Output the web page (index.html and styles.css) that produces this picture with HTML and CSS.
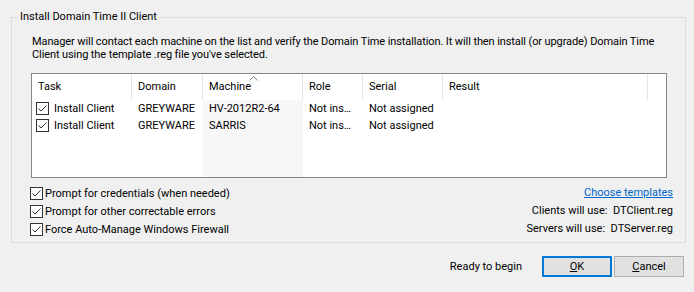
FILE: index.html
```html
<!DOCTYPE html>
<html>
<head>
    <title>Install Domain Time II Client</title>
    <link rel="stylesheet" href="styles.css">
</head>
<body>
    <div class="dialog">
        <fieldset class="group">
            <legend>Install Domain Time II Client</legend>

            <p class="intro">Manager will contact each machine on the list and verify the Domain Time installation. It will then install (or upgrade) Domain Time Client using the template .reg file you've selected.</p>

            <div class="list">
                <div class="col col-task">
                    <div class="th">Task</div>
                    <div class="td"><span class="check"><svg width="13" height="13" viewBox="0 0 13 13"><rect x="0.5" y="0.5" width="12" height="12" fill="#fff" stroke="#333"/><path d="M2.5 6.5 L5 9 L10.5 3.5" fill="none" stroke="#333" stroke-width="1"/></svg></span>Install Client</div>
                    <div class="td"><span class="check"><svg width="13" height="13" viewBox="0 0 13 13"><rect x="0.5" y="0.5" width="12" height="12" fill="#fff" stroke="#333"/><path d="M2.5 6.5 L5 9 L10.5 3.5" fill="none" stroke="#333" stroke-width="1"/></svg></span>Install Client</div>
                </div>
                <div class="col col-domain">
                    <div class="th">Domain</div>
                    <div class="td">GREYWARE</div>
                    <div class="td">GREYWARE</div>
                </div>
                <div class="col col-machine sorted">
                    <div class="th">Machine
                        <svg class="sort-arrow" width="9" height="5" viewBox="0 0 9 5"><path d="M0.5 4.5 L4.5 0.5 L8.5 4.5" fill="none" stroke="#888" stroke-width="1"/></svg>
                    </div>
                    <div class="td">HV-2012R2-64</div>
                    <div class="td">SARRIS</div>
                </div>
                <div class="col col-role">
                    <div class="th">Role</div>
                    <div class="td">Not ins…</div>
                    <div class="td">Not ins…</div>
                </div>
                <div class="col col-serial">
                    <div class="th">Serial</div>
                    <div class="td">Not assigned</div>
                    <div class="td">Not assigned</div>
                </div>
                <div class="col col-result">
                    <div class="th">Result</div>
                </div>
                <div class="col col-rest">
                    <div class="th"></div>
                </div>
            </div>

            <div class="options">
                <div class="checks">
                    <label class="opt"><span class="check"><svg width="13" height="13" viewBox="0 0 13 13"><rect x="0.5" y="0.5" width="12" height="12" fill="#fff" stroke="#333"/><path d="M2.5 6.5 L5 9 L10.5 3.5" fill="none" stroke="#333" stroke-width="1"/></svg></span>Prompt for credentials (when needed)</label>
                    <label class="opt"><span class="check"><svg width="13" height="13" viewBox="0 0 13 13"><rect x="0.5" y="0.5" width="12" height="12" fill="#fff" stroke="#333"/><path d="M2.5 6.5 L5 9 L10.5 3.5" fill="none" stroke="#333" stroke-width="1"/></svg></span>Prompt for other correctable errors</label>
                    <label class="opt"><span class="check"><svg width="13" height="13" viewBox="0 0 13 13"><rect x="0.5" y="0.5" width="12" height="12" fill="#fff" stroke="#333"/><path d="M2.5 6.5 L5 9 L10.5 3.5" fill="none" stroke="#333" stroke-width="1"/></svg></span>Force Auto-Manage Windows Firewall</label>
                </div>
                <div class="templates">
                    <a href="#" class="link">Choose templates</a>
                    <div class="line">Clients will use:&nbsp; DTClient.reg</div>
                    <div class="line">Servers will use:&nbsp; DTServer.reg</div>
                </div>
            </div>
        </fieldset>

        <div class="footer">
            <span class="status">Ready to begin</span>
            <button class="btn btn-default"><u>O</u>K</button>
            <button class="btn"><u>C</u>ancel</button>
        </div>
    </div>
</body>
</html>
```

FILE: styles.css
```css
body {
    margin: 0;
    background: #f0f0f0;
    font-family: Roboto, "Liberation Sans", Arial, sans-serif;
    font-size: 11px;
    color: #000;
}
.dialog {
    width: 694px;
    height: 292px;
    overflow: hidden;
}
.group {
    margin: 9px 8px 0 11px;
    padding: 0 18px 4px 19px;
    border: 1px solid #dcdcdc;
    min-width: 0;
}
.group legend {
    padding: 0 2px;
    margin-left: -13px;
    line-height: 16px;
}
.intro {
    margin: 10px -10px 0 1px;
    line-height: 13px;
    letter-spacing: -0.1px;
}
.list {
    display: flex;
    height: 103px;
    margin-top: 12px;
    background: #fff;
    border: 1px solid #828790;
}
.col {
    display: flex;
    flex-direction: column;
    overflow: hidden;
}
.th {
    position: relative;
    height: 26px;
    line-height: 26px;
    padding-left: 6px;
    border-right: 1px solid #e5e5e5;
    background: #fff;
    white-space: nowrap;
}
.td {
    height: 17px;
    line-height: 17px;
    padding-left: 6px;
    white-space: nowrap;
    display: flex;
    align-items: center;
}
.col-task { width: 100px; flex: none; }
.col-task .td { padding-left: 4px; }
.col-domain { width: 71px; flex: none; }
.col-machine { width: 100px; flex: none; }
.col-role { width: 60px; flex: none; }
.col-serial { width: 80px; flex: none; }
.col-result { width: 205px; flex: none; }
.col-rest { flex: 1; }
.col-rest .th { border-right: none; }
.sorted { background: #f7f7f7; }
.sort-arrow {
    position: absolute;
    left: 46px;
    top: 2px;
}
.check {
    display: inline-flex;
    flex: none;
    width: 13px;
    height: 13px;
    margin-right: 5px;
}
.options {
    display: flex;
    justify-content: space-between;
    margin-top: 6px;
}
.opt {
    display: flex;
    align-items: center;
    height: 18px;
    margin-left: -1px;
}
.opt .check { margin-right: 2px; }
.templates {
    text-align: right;
    margin-right: -6px;
}
.templates .link,
.templates .line {
    display: block;
    height: 18px;
    line-height: 18px;
}
.link {
    color: #0066cc;
    text-decoration: underline;
}
.footer {
    display: flex;
    align-items: center;
    justify-content: flex-end;
    margin-top: 13px;
    padding-right: 10px;
}
.status { margin-right: 18px; }
.btn {
    width: 70px;
    height: 21px;
    margin-left: 2px;
    padding: 0;
    font: inherit;
    color: #000;
    background: #e1e1e1;
    border: 1px solid #adadad;
}
.btn-default {
    border: 2px solid #0078d7;
}
.btn u { text-decoration: underline; }
```
